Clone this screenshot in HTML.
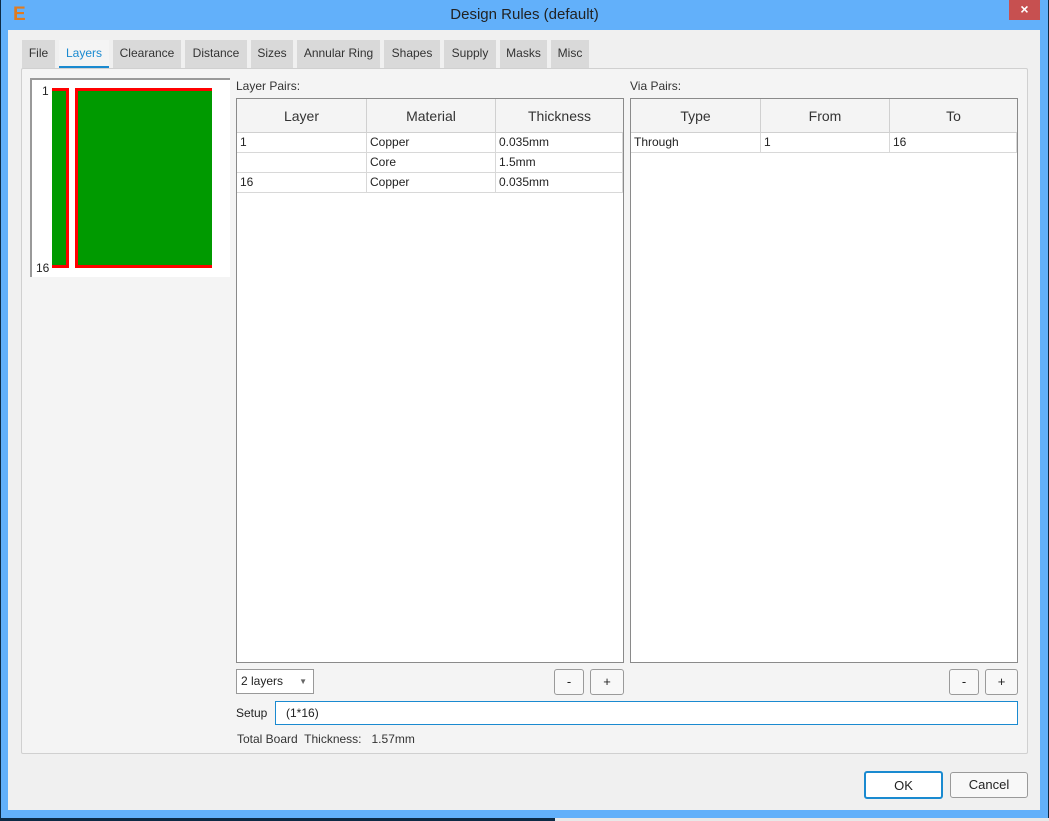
<!DOCTYPE html><html><head><style>
*{box-sizing:border-box;margin:0;padding:0}
body{width:1049px;height:821px;background:#0c2a45;position:relative;overflow:hidden;font-family:"Liberation Sans",sans-serif;font-size:12px;color:#222}
.a{position:absolute}
.win{left:1px;top:0;width:1047px;height:818px;background:#62b0fa}
.client{left:8px;top:30px;width:1032px;height:780px;background:#f0f0f0}
.tab{position:absolute;top:40px;height:28px;background:#d9d9d9;text-align:center;line-height:27px;color:#333;font-size:12px}
.pane{left:21px;top:68px;width:1007px;height:686px;background:#f4f4f4;border:1px solid #d0d0d0;border-radius:2px}
.tbl{background:#fff;border:1px solid #8a8a8a}
.th{position:absolute;top:0;height:34px;background:#f4f4f4;border-right:1px solid #d0d0d0;border-bottom:1px solid #d0d0d0;text-align:center;line-height:34px;font-size:14px;color:#333}
.td{position:absolute;height:20px;border-right:1px solid #d8d8d8;border-bottom:1px solid #d8d8d8;line-height:19px;padding-left:3px;font-size:12px}
.btn{position:absolute;background:#f8f8f8;border:1px solid #9a9a9a;border-radius:3px;text-align:center;font-size:13px}
</style></head><body>
<div class="a win"></div>
<div class="a" style="left:13px;top:4px;color:#e07b20;font-weight:bold;font-size:19px">E</div>
<div class="a" style="left:0;width:1049px;top:6px;text-align:center;font-size:15px;color:#222">Design Rules (default)</div>
<div class="a" style="left:1009px;top:0;width:31px;height:20px;background:#c75050;color:#fff;text-align:center;font-size:14px;line-height:19px;font-weight:bold">×</div>
<div class="a client"></div>
<div class="tab" style="left:22px;width:33px">File</div>
<div class="tab" style="left:59px;width:50px;background:#f4f4f4;color:#1a8ad0;border-bottom:3px solid #1a8ad0;height:29px">Layers</div>
<div class="tab" style="left:113px;width:68px">Clearance</div>
<div class="tab" style="left:185px;width:62px">Distance</div>
<div class="tab" style="left:251px;width:42px">Sizes</div>
<div class="tab" style="left:297px;width:83px">Annular Ring</div>
<div class="tab" style="left:384px;width:56px">Shapes</div>
<div class="tab" style="left:444px;width:52px">Supply</div>
<div class="tab" style="left:500px;width:47px">Masks</div>
<div class="tab" style="left:551px;width:38px">Misc</div>
<div class="a pane"></div>
<div class="a" style="left:30px;top:78px;width:200px;height:199px;background:#fff;border-left:2px solid #999;border-top:2px solid #999"></div>
<div class="a" style="left:42px;top:84px;font-size:12px">1</div>
<div class="a" style="left:36px;top:261px;font-size:12px">16</div>
<div class="a" style="left:52px;top:88px;width:17px;height:180px;background:#009a00;border:3px solid #f00;border-left:none"></div>
<div class="a" style="left:75px;top:88px;width:137px;height:180px;background:#009a00;border:3px solid #f00;border-right:none"></div>
<div class="a" style="left:236px;top:79px;color:#333">Layer Pairs:</div>
<div class="a" style="left:630px;top:79px;color:#333">Via Pairs:</div>
<div class="a tbl" style="left:236px;top:98px;width:388px;height:565px">
<div class="th" style="left:0;width:130px">Layer</div><div class="th" style="left:130px;width:129px">Material</div><div class="th" style="left:259px;width:127px;border-right:none">Thickness</div>
<div class="td" style="left:0;top:34px;width:130px">1</div><div class="td" style="left:130px;top:34px;width:129px">Copper</div><div class="td" style="left:259px;top:34px;width:127px">0.035mm</div>
<div class="td" style="left:0;top:54px;width:130px"></div><div class="td" style="left:130px;top:54px;width:129px">Core</div><div class="td" style="left:259px;top:54px;width:127px">1.5mm</div>
<div class="td" style="left:0;top:74px;width:130px">16</div><div class="td" style="left:130px;top:74px;width:129px">Copper</div><div class="td" style="left:259px;top:74px;width:127px">0.035mm</div>
</div>
<div class="a tbl" style="left:630px;top:98px;width:388px;height:565px">
<div class="th" style="left:0;width:130px">Type</div><div class="th" style="left:130px;width:129px">From</div><div class="th" style="left:259px;width:127px;border-right:none">To</div>
<div class="td" style="left:0;top:34px;width:130px">Through</div><div class="td" style="left:130px;top:34px;width:129px">1</div><div class="td" style="left:259px;top:34px;width:127px">16</div>
</div>
<div class="a" style="left:236px;top:669px;width:78px;height:25px;background:#fff;border:1px solid #999;line-height:23px;padding-left:4px">2 layers<span style="position:absolute;right:6px;font-size:8px;color:#666">▼</span></div>
<div class="btn" style="left:554px;top:669px;width:30px;height:26px;line-height:24px">-</div>
<div class="btn" style="left:590px;top:669px;width:34px;height:26px;line-height:24px">+</div>
<div class="btn" style="left:949px;top:669px;width:30px;height:26px;line-height:24px">-</div>
<div class="btn" style="left:985px;top:669px;width:33px;height:26px;line-height:24px">+</div>
<div class="a" style="left:236px;top:706px">Setup</div>
<div class="a" style="left:275px;top:701px;width:743px;height:24px;background:#fff;border:1px solid #1a8ad0;line-height:22px;padding-left:10px">(1*16)</div>
<div class="a" style="left:237px;top:732px;color:#333">Total Board&nbsp; Thickness:&nbsp;&nbsp; 1.57mm</div>
<div class="btn" style="left:864px;top:771px;width:79px;height:28px;line-height:26px;border:2px solid #1a8ad0;background:#fff">OK</div>
<div class="btn" style="left:950px;top:772px;width:78px;height:26px;line-height:24px">Cancel</div>
<div class="a" style="left:555px;top:818px;width:494px;height:3px;background:#e8e8e8"></div>
</body></html>
